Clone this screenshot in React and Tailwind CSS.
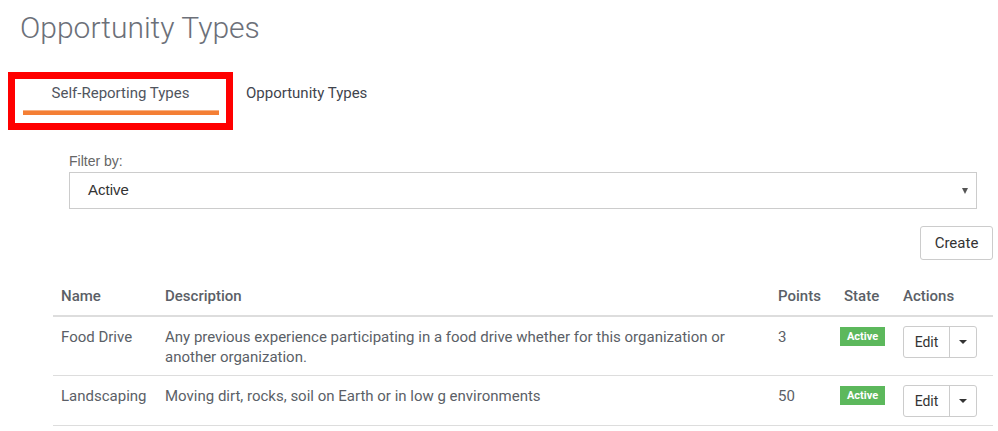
import React from "react";

const rows = [
  {
    name: "Food Drive",
    description:
      "Any previous experience participating in a food drive whether for this organization or another organization.",
    points: 3,
  },
  {
    name: "Landscaping",
    description: "Moving dirt, rocks, soil on Earth or in low g environments",
    points: 50,
  },
];

function EditButton() {
  return (
    <div className="flex h-[32px] w-[74px] rounded-[3px] border border-[#cccccc] bg-white">
      <button className="flex-1 text-[14px] text-[#333]">Edit</button>
      <span className="flex w-[27px] items-center justify-center border-l border-[#cccccc]">
        <span className="h-0 w-0 border-x-[4px] border-t-[4px] border-x-transparent border-t-[#333]" />
      </span>
    </div>
  );
}

export default function App() {
  return (
    <main className="min-h-screen bg-white pb-8 text-[#5b5f67]" style={{ fontFamily: "Roboto, 'Liberation Sans', sans-serif" }}>
      <h1 className="px-[20px] pt-[8px] text-[30px] font-light leading-[40px] text-[#6c7079]">Opportunity Types</h1>

      {/* tabs */}
      <div className="mt-[24px] flex items-start pl-[8px]">
        <div className="flex h-[58px] w-[225px] flex-col items-center border-[7px] border-[#ff0000] pt-[4px]">
          <span className="text-[15px] leading-[20px] text-[#50555e]">Self-Reporting Types</span>
          <span className="mt-[7px] h-[5px] w-[196px] border-t border-[#f8b183] bg-[#f47f35]" />
        </div>
        <span className="ml-[13px] pt-[11px] text-[15px] leading-[20px] text-[#3f444d]">Opportunity Types</span>
      </div>

      {/* filter */}
      <div className="mt-[22px] pl-[69px] pr-[21px]" style={{ fontFamily: "'Liberation Sans', Arial, sans-serif" }}>
        <label className="block text-[14px] leading-[18px] text-[#666]">Filter by:</label>
        <div className="mt-[2px] flex h-[37px] items-center justify-between border border-[#cccccc] pl-[18px] pr-[8px]">
          <span className="text-[15px] text-[#333]">Active</span>
          <span className="h-0 w-0 border-x-[3.5px] border-t-[6px] border-x-transparent border-t-[#555]" />
        </div>
      </div>

      <div className="mt-[17px] flex justify-end pr-[5px]">
        <button className="h-[34px] w-[73px] rounded-[3px] border border-[#cccccc] text-[15px] text-[#333]">Create</button>
      </div>

      {/* table */}
      <div className="ml-[53px] mr-[5px] mt-[17px]">
        <table className="w-full border-collapse text-left text-[15px]">
          <thead>
            <tr className="border-b-2 border-[#dddddd]">
              <th className="w-[104px] px-[8px] pb-[9px] pt-[9px] font-medium leading-[20px] text-[#5b5f67]">Name</th>
              <th className="px-[8px] pb-[9px] pt-[9px] font-medium leading-[20px] text-[#5b5f67]">Description</th>
              <th className="w-[66px] px-[8px] pb-[9px] pt-[9px] font-medium leading-[20px] text-[#5b5f67]">Points</th>
              <th className="w-[59px] px-[8px] pb-[9px] pt-[9px] font-medium leading-[20px] text-[#5b5f67]">State</th>
              <th className="w-[98px] px-[8px] pb-[9px] pt-[9px] font-medium leading-[20px] text-[#5b5f67]">Actions</th>
            </tr>
          </thead>
          <tbody>
            {rows.map((r) => (
              <tr key={r.name} className="border-b border-[#dddddd] align-top">
                <td className="px-[8px] pb-[8px] pt-[10px] leading-[20px]">{r.name}</td>
                <td className="px-[8px] pb-[8px] pt-[10px] pr-[20px] leading-[20px]">{r.description}</td>
                <td className="px-[8px] pb-[8px] pt-[10px] leading-[20px]">{r.points}</td>
                <td className="px-[4px] pb-[8px] pt-[10px]">
                  <span className="block h-[19px] w-[45px] bg-[#5cb85c] text-center text-[11px] font-bold leading-[19px] text-white">Active</span>
                </td>
                <td className="px-[8px] pb-[8px] pt-[9px]">
                  <EditButton />
                </td>
              </tr>
            ))}
          </tbody>
        </table>
      </div>
    </main>
  );
}
